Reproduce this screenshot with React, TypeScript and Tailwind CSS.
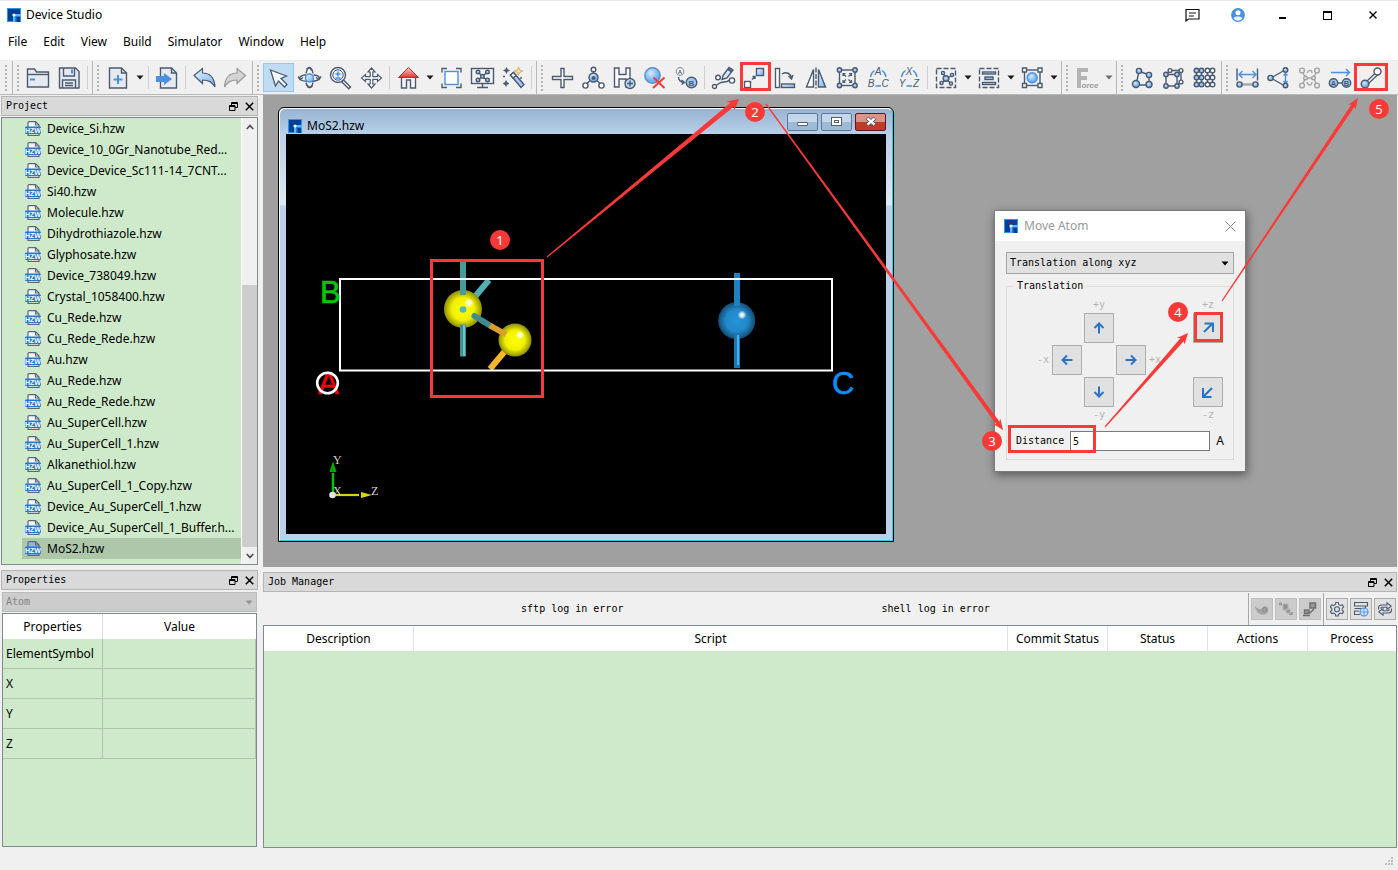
import React from 'react';

const ui = "font-['Noto_Sans',sans-serif] text-xs";
const mono = "font-['DejaVu_Sans_Mono',monospace] text-[10px] leading-3";

const INK = '#4b5a70';
const BLUE = '#4a90e2';

/* ---------- small drawing helpers ---------- */

const Icon = ({ children, size = 25 }: { children: React.ReactNode; size?: number }) => (
  <svg
    width={size}
    height={size}
    viewBox={`0 0 ${size} ${size}`}
    fill="none"
    stroke={INK}
    strokeWidth="1.4"
    className="shrink-0"
    aria-hidden="true"
  >
    {children}
  </svg>
);

const Ball = ({ x, y, r = 3, fill = 'url(#ball)' }: { x: number; y: number; r?: number; fill?: string }) => (
  <circle cx={x} cy={y} r={r} fill={fill} />
);

const Letter = ({ x, y, size = 8, fill = INK, italic = false, bold = true, children }: {
  x: number; y: number; size?: number; fill?: string; italic?: boolean; bold?: boolean; children: string;
}) => (
  <text
    x={x}
    y={y}
    fontSize={size}
    fontWeight={bold ? 'bold' : 'normal'}
    fontStyle={italic ? 'italic' : 'normal'}
    fontFamily="Liberation Sans, sans-serif"
    textAnchor="middle"
    fill={fill}
    stroke="none"
  >
    {children}
  </text>
);

const Defs = () => (
  <svg width="0" height="0" className="absolute" aria-hidden="true">
    <defs>
      <radialGradient id="ball" cx="40%" cy="35%">
        <stop offset="0" stopColor="#d8ebff" />
        <stop offset="1" stopColor="#6fb0f2" />
      </radialGradient>
      <linearGradient id="sky" x1="0" y1="0" x2="1" y2="1">
        <stop offset="0" stopColor="#eef6ff" />
        <stop offset="1" stopColor="#6fb0f2" />
      </linearGradient>
      <linearGradient id="roof" x1="0" y1="0" x2="0" y2="1">
        <stop offset="0" stopColor="#ffd0cc" />
        <stop offset="1" stopColor="#e0312c" />
      </linearGradient>
      <radialGradient id="sulfur" cx="50%" cy="50%">
        <stop offset="0" stopColor="#ffff00" />
        <stop offset="0.6" stopColor="#f0f000" />
        <stop offset="1" stopColor="#8e8e00" />
      </radialGradient>
      <radialGradient id="moly" cx="50%" cy="50%">
        <stop offset="0" stopColor="#2693d8" />
        <stop offset="0.6" stopColor="#2288c8" />
        <stop offset="1" stopColor="#124c72" />
      </radialGradient>
      <radialGradient id="shine">
        <stop offset="0" stopColor="#ffffff" />
        <stop offset="0.4" stopColor="#ffffff" stopOpacity="0.8" />
        <stop offset="1" stopColor="#ffffff" stopOpacity="0" />
      </radialGradient>
    </defs>
  </svg>
);

const Logo = () => (
  <svg width="14" height="14" viewBox="0 0 14 14" className="shrink-0" aria-hidden="true">
    <rect x=".5" y=".5" width="13" height="13" fill="#0a3d91" stroke="#1c9cf0" />
    <path d="M6 14V6h8v2.500H8V14z" fill="#56b8f5" />
    <path d="M9.500 10H13v4H9.500z" fill="#0a3d91" />
    <path d="M8 8.500h1.500V14H8z" fill="#1c7fdc" />
    <circle cx="7" cy="7" r="1.600" fill="#e8f7ff" />
  </svg>
);

/* ---------- toolbar icons ---------- */

const icons: Record<string, React.ReactNode> = {
  open: (
    <>
      <path d="M1.500 4h7l2 3h12v15h-21z" fill="#e6eaf0" />
      <path d="M1.500 9.500h21" />
      <path d="M4 14.500h5" stroke={BLUE} strokeWidth="2" />
    </>
  ),
  save: (
    <>
      <path d="M2.500 3h16l3.500 3.500V23h-19.500z" fill="#e6eaf0" />
      <path d="M6.500 3v8h11V3M5.500 23v-8h13v8M8 18h8M8 20.500h8" />
      <path d="M15 4.500v4" stroke={BLUE} strokeWidth="2" />
    </>
  ),
  create: (
    <>
      <path d="M3.500 3h12l5 5v15h-17z" fill="#e6eaf0" />
      <path d="M15.500 3v5h5" />
      <path d="M12 10v9M7.500 14.500h9" stroke={BLUE} strokeWidth="2" />
    </>
  ),
  import: (
    <>
      <path d="M5.500 3h11l5 5v15h-16z" fill="#e6eaf0" />
      <path d="M16.500 3v5h5" />
      <path d="M1 11h8V8l8 6-8 6v-3H1z" fill={BLUE} stroke="none" />
    </>
  ),
  undo: <path d="M2 10.500 10.500 3.500v4.500c8 0 12 5 12.500 14-3-5-6-7-12.500-7v3.500z" fill="url(#sky)" strokeWidth="1.200" />,
  redo: <path d="M22.500 10.500 14 3.500v4.500c-8 0-12 5-12.500 14 3-5 6-7 12.500-7v3.500z" fill="#d4d4d4" stroke="#9b9b9b" strokeWidth="1.200" />,
  select: <path d="M4.500 5l16 6-5.500 2.500 6 6-2.500 2.500-6-6L9.500 21z" fill="#f5f8fc" strokeWidth="1.300" />,
  orbit: (
    <>
      <path d="M9 9.800C4 10.500 2 12 3 14c1.500 2.800 16 3.500 19 0 1.200-2-1-3.500-5.500-4.200" />
      <path d="M9 8.500c.8-4 2-6 3.500-6s3.200 3 3.500 6M9 17.500c.8 3.500 2 5 3.500 5s2.800-1.500 3.500-5" />
      <circle cx="12.500" cy="13" r="4" fill="url(#sky)" stroke={BLUE} />
      <path d="M1 11.500l2 3 3-2M24 11.500l-2 3-3-2M9.500 4l3-1.500 2.500 3M9.500 19.500l3 3 3-1.500" />
    </>
  ),
  zoom: (
    <>
      <circle cx="10" cy="10" r="7.500" fill="#f6f9fd" />
      <circle cx="10" cy="10" r="5.200" fill="#e4f0fc" strokeWidth="1" />
      <path d="M15.500 15l7 7-1.800 1.800-7-7z" fill="#fff" />
      <path d="M10 6.500v5M7.500 9h5M7.500 13h5" stroke={BLUE} />
    </>
  ),
  pan: (
    <path
      d="M12.500 3l3.500 4h-2.200v4.700h4.700V9.500l4 3.500-4 3.500v-2.200h-4.700v4.700H16L12.500 23 9 19h2.200v-4.700H6.500v2.200l-4-3.500 4-3.500v2.200h4.700V7H9z"
      fill="#fff"
      strokeWidth="1.200"
    />
  ),
  home: (
    <>
      <path d="M5.500 12v11h5v-8h4v8h5V12" fill="#f5f5f5" />
      <path d="M12.500 2.500 2.500 12.500h20z" fill="url(#roof)" stroke="#9a3a3a" strokeWidth="1" />
    </>
  ),
  fit: (
    <>
      <rect x="6" y="6.500" width="13" height="13" fill="#fff" stroke={BLUE} />
      <path d="M3 7.500v-4h5M17 3.500h5v4M3 18.500v4h5M22 18.500v4h-5" />
    </>
  ),
  display: (
    <>
      <rect x="1.500" y="3.500" width="22" height="15" />
      <path d="M12.500 19v3M7 22.500h11M8 7l4 4 6-4M8 15l4-3 6 3" />
      <Ball x={8} y={7} r={1.800} />
      <Ball x={17.500} y={7} r={1.800} />
      <Ball x={12.500} y={11.300} r={1.800} />
      <Ball x={8} y={15} r={1.800} />
      <Ball x={17.500} y={15} r={1.800} />
    </>
  ),
  wand: (
    <>
      <path d="M9.500 10l3-2.500L23 19.500 20 22.500z" fill="#9cc9f5" />
      <path d="M9.500 10l3-2.500 2.500 3-3 2.500z" fill="#fff" />
      <path d="M17.500 2l1.200 3 3 1.200-3 1.200-1.200 3-1.200-3-3-1.200 3-1.200z" fill="#ffe680" stroke="#b9a55a" strokeWidth=".8" />
      <path
        d="M5.500 2.500l1 2 2 1-2 1-1 2-1-2-2-1 2-1zM5 15.500l1 2 2 1-2 1-1 2-1-2-2-1 2-1z"
        fill={INK}
        strokeWidth=".6"
      />
      <path d="M2 11.500h2M19 13h2" strokeWidth="1.500" />
    </>
  ),
  plus: <path d="M11 3.500h3v8h8.500v3H14v8h-3v-8H2.500v-3H11z" fill="#fff" />,
  fragment: (
    <>
      <path d="M12.500 6v6M9 15.500 5.500 19M16 15.500l3.500 3.500" />
      <circle cx="12.500" cy="12.500" r="4.500" fill="url(#ball)" />
      <circle cx="12.500" cy="13" r="1.300" fill={INK} />
      <Ball x={12.500} y={4.500} r={2.300} fill="#fff" />
      <Ball x={4.500} y={20.500} r={2.600} fill="#fff" />
      <Ball x={20.500} y={20.500} r={2.600} fill="#fff" />
    </>
  ),
  hydrogen: (
    <>
      <path d="M2.500 3h4.500v6.500h7V3H18v19H14v-8H7v8H2.500z" fill="#fff" />
      <circle cx="18" cy="18.500" r="5" fill="#b5d7f8" />
      <path d="M18 15.500v6M15 18.500h6" />
    </>
  ),
  erase: (
    <>
      <circle cx="9.500" cy="10.500" r="7.700" fill="url(#ball)" stroke="#5f8fc4" />
      <path d="M10.500 12.500l11 10.500M21.500 12.500 10 23" stroke="#ef3b3b" strokeWidth="2" />
    </>
  ),
  swapAtom: (
    <>
      <circle cx="6" cy="6.500" r="3.800" fill="#f7f7f7" stroke="#909aa8" strokeWidth="1.200" />
      <Letter x={6} y={8.800} size={6}>A</Letter>
      <circle cx="17.500" cy="17.500" r="5.300" fill="#9cc9f5" />
      <Letter x={17.500} y={20.500}>B</Letter>
      <path d="M4.500 12c0 4 2 5 5.500 5.500M7.500 15l3 2.500-3 2" />
    </>
  ),
  drawBond: (
    <>
      <path d="M4 21l6-3.500 6-1 4-2" />
      <path d="M11 14.500l1-4 6-8 4 2.500-6 8z" fill="#d7e6f6" />
      <path d="M17 4l4 2.500" strokeWidth="2.500" />
      <Ball x={3.500} y={21.500} r={2} fill="#fff" />
      <Ball x={7} y={12.500} r={2.300} fill="#fff" />
      <Ball x={21} y={15.500} r={2.600} fill="#fff" />
    </>
  ),
  move: (
    <>
      <rect x="14.500" y="3.500" width="7" height="7" fill="url(#sky)" />
      <rect x="2.500" y="16.500" width="6" height="6" fill="#fff" />
      <path d="M10 14.500l2.500-2.500M10.500 11.500H13v2.500" />
    </>
  ),
  rotate: (
    <>
      <rect x="2.500" y="3.500" width="4" height="19" fill="#fff" />
      <rect x="8.500" y="19" width="13" height="3.500" fill="url(#sky)" />
      <path d="M9 9c4-2.500 9-1 9.500 4.500M15.500 11l3 3 1.500-4" />
    </>
  ),
  mirror: (
    <>
      <path d="M9.500 4.500V22H2.500z" fill="#fff" />
      <path d="M14.500 4.500V22h7z" fill="url(#sky)" />
      <path d="M12 2.500v21" strokeDasharray="5 1.500" />
    </>
  ),
  scale: (
    <>
      <rect x="4.500" y="5" width="15.500" height="15.500" />
      <path d="M8 11V8.500h2.500M8 8.500l3 3M16.500 11V8.500H14M16.500 8.500l-3 3M8 15v2.500h2.500M8 17.500l3-3M16.500 15v2.500H14M16.500 17.500l-3-3" strokeWidth="1.200" />
      <Ball x={4.500} y={5} r={2.200} />
      <Ball x={20} y={5} r={2.200} />
      <Ball x={4.500} y={20.500} r={2.200} />
      <Ball x={20} y={20.500} r={2.200} />
    </>
  ),
  abc: (
    <>
      <path d="M4.500 12c.5-3.500 1.500-5 4-6.500M20 12c-.5-3.500-1.500-5-4-6.500M9.500 21h5.500" stroke={BLUE} />
      <Letter x={12} y={10} size={10} italic bold={false}>A</Letter>
      <Letter x={5} y={22} size={10} italic bold={false}>B</Letter>
      <Letter x={19} y={22} size={10} italic bold={false}>C</Letter>
    </>
  ),
  xyz: (
    <>
      <path d="M4.500 12c.5-3.500 1.500-5 4-6.500M20 12c-.5-3.500-1.500-5-4-6.500M9.500 21h5.500" stroke={BLUE} />
      <Letter x={12} y={10} size={10} italic bold={false}>X</Letter>
      <Letter x={5} y={22} size={10} italic bold={false}>Y</Letter>
      <Letter x={19} y={22} size={10} italic bold={false}>Z</Letter>
    </>
  ),
  selectFragment: (
    <>
      <rect x="2.500" y="3.500" width="19" height="19" strokeDasharray="5 2" />
      <path d="M12 14 9 8M12 14l6-3.500M12 14l5 4.500M12 14l-4.500 4" />
      <Ball x={9} y={8} r={1.600} />
      <Ball x={18} y={10} r={1.600} />
      <Ball x={12} y={13.500} r={2.800} />
      <Ball x={7.500} y={18} r={1.600} />
      <Ball x={17} y={18.500} r={1.600} />
    </>
  ),
  align: (
    <>
      <rect x="2.500" y="3.500" width="19" height="19" strokeDasharray="5 2" />
      <rect x="5.500" y="7" width="13" height="2" fill="#d7e6f6" />
      <rect x="8" y="12" width="8" height="2.500" fill="#9cc9f5" />
      <rect x="5.500" y="17.500" width="13" height="2" fill="#d7e6f6" />
    </>
  ),
  bounds: (
    <>
      <rect x="4.500" y="5" width="15.500" height="15.500" />
      <circle cx="12.200" cy="12.800" r="5" fill="url(#ball)" stroke={BLUE} />
      <path d="M2.500 3h4v4h-4zM18 3h4v4h-4zM2.500 18.500h4v4h-4zM18 18.500h4v4h-4z" fill="#fff" />
    </>
  ),
  force: (
    <>
      <path d="M2 3h11v4H6v4h6v4H6v8H2z" fill="#b4b4b4" stroke="none" />
      <Letter x={15} y={22.500} size={8} fill="#999" italic>orce</Letter>
    </>
  ),
  molecule: (
    <>
      <path d="M9 6 19 10v10H6z" />
      <Ball x={9} y={6} r={2.600} />
      <Ball x={19} y={10} r={2.600} />
      <Ball x={6} y={19} r={3.500} />
      <Ball x={19} y={19.500} r={3} />
    </>
  ),
  crystal: (
    <>
      <path d="M5 9.500h11v11.500H5zM9 5.500h11v11.500M5 9.500l4-4M16 9.500l4-4M16 21l4-4" />
      <Ball x={9} y={5.500} r={1.900} fill="#fff" />
      <Ball x={20} y={5.500} r={1.900} fill="#fff" />
      <Ball x={20} y={17} r={1.900} fill="#fff" />
      <Ball x={5} y={9.500} r={2.200} />
      <Ball x={16} y={9.500} r={2.200} />
      <Ball x={5} y={21} r={2.200} />
      <Ball x={16} y={21} r={2.200} />
    </>
  ),
  supercell: (
    <>
      {[5.500, 12.500, 19.500].map((y) =>
        [4.500, 9.500, 15.500, 20.500].map((x, i) => <Ball key={`${x}-${y}`} x={x} y={y} r={2.300} fill={i < 2 ? '#9cc9f5' : '#fff'} />)
      )}
      <path d="M4.500 8v2M9.500 8v2M15.500 8v2M20.500 8v2M4.500 15v2M9.500 15v2M15.500 15v2M20.500 15v2" />
    </>
  ),
  distance: (
    <>
      <path d="M2 3.500v12M22.500 3.500v12" />
      <path d="M4 9.500h17M7.500 6 4 9.500 7.500 13M17.500 6 21 9.500 17.500 13" stroke={BLUE} />
      <path d="M6 19.500h13" stroke="#a5abb3" strokeWidth="2.500" />
      <Ball x={4.500} y={19.500} r={2.600} />
      <Ball x={20.500} y={19.500} r={2.600} />
    </>
  ),
  angle: (
    <>
      <path d="M5 13 18 5.500M5 13l13 7.500" />
      <path d="M19.500 9.500v8M17.500 10.500l2-2 2 2M17.500 16l2 2 2-2" stroke={BLUE} />
      <Ball x={4.500} y={13} r={2.600} />
      <Ball x={19.500} y={5} r={2.300} />
      <Ball x={19.500} y={20.500} r={2.300} />
    </>
  ),
  dihedral: (
    <g stroke="#a3a3a3">
      <path d="M5 5.500 8.500 13 5 20.500M20 5.500 16.500 13 20 20.500M8.500 13h8M10 8c2-4 5-3 5 0M10 17c2 5 5 3 5 0" />
      <Ball x={5} y={5.500} r={2.400} fill="#eee" />
      <Ball x={20} y={5.500} r={2.400} fill="#eee" />
      <Ball x={5} y={20.500} r={2.400} fill="#eee" />
      <Ball x={20} y={20.500} r={2.400} fill="#eee" />
      <Ball x={8.500} y={13} r={1.800} fill="#eee" />
      <Ball x={16.500} y={13} r={1.800} fill="#eee" />
    </g>
  ),
  vector: (
    <>
      <path d="M3 7.500h18M18 4l3.500 3.500L18 11" stroke={BLUE} />
      <path d="M9 18h7" />
      <circle cx="5.500" cy="18" r="4.200" fill="#9cc9f5" />
      <circle cx="18.500" cy="18" r="4.200" fill="#9cc9f5" />
      <Letter x={5.500} y={20.800} size={7.500}>A</Letter>
      <Letter x={18.500} y={20.800} size={7.500}>B</Letter>
    </>
  ),
  bond: (
    <>
      <path d="M7 17 17.500 7M9 19 19.500 9" strokeWidth="1.200" />
      <Ball x={18.500} y={6.500} r={3.500} fill="#fff" />
      <Ball x={6} y={19} r={3.800} />
    </>
  ),
};

const Handle = () => (
  <span className="flex w-2.5 shrink-0 flex-col items-center justify-center gap-[2px]" aria-hidden="true">
    {[0, 1, 2, 3, 4, 5, 6].map((i) => (
      <span key={i} className="size-[2px] bg-[#b4b4b4]" />
    ))}
  </span>
);

const Caret = ({ color = '#1a1a1a' }: { color?: string }) => (
  <svg width="8" height="5" viewBox="0 0 8 5" aria-hidden="true">
    <path d="M.5.500h7L4 4.500z" fill={color} />
  </svg>
);

// '|' is a separator, a trailing 'v' entry is the menu arrow of the button before it
const toolGroups: string[][] = [
  [],
  ['open', 'save', '|'],
  ['create', 'v', '|', 'import', '|', 'undo', 'redo'],
  ['select', 'orbit', 'zoom', 'pan', '|', 'home', 'v', 'fit', 'display', 'wand', '|'],
  [
    'plus', 'fragment', 'hydrogen', 'erase', 'swapAtom', '|',
    'drawBond', 'move', 'rotate', 'mirror', 'scale', 'abc', 'xyz', '|',
    'selectFragment', 'v', 'align', 'v', 'bounds', 'v',
  ],
  ['force', 'v'],
  ['molecule', 'crystal', 'supercell'],
  ['distance', 'angle', 'dihedral', 'vector', 'bond'],
];

const Toolbar = () => (
  <div className="flex h-[34px] shrink-0 border-b border-[#b8b8b8] bg-[#f0f0f0] pl-px">
    {toolGroups.map((group, g) => (
      <div key={g} className={`flex items-stretch pr-px ${g < toolGroups.length - 1 ? 'border-r border-[#b8b8b8]' : ''}`}>
        <Handle />
        {group.map((name, i) => {
          if (name === '|') {
            return <span key={i} className="my-[5px] mr-[3px] ml-[2px] w-px bg-[#cfcfcf]" />;
          }
          if (name === 'v') {
            return (
              <button key={i} type="button" aria-label="More" className="flex w-3 items-center justify-center">
                <Caret color={group[i - 1] === 'force' ? '#6d6d6d' : '#1a1a1a'} />
              </button>
            );
          }
          return (
            <button
              key={i}
              type="button"
              aria-label={name}
              className={`my-[2px] flex w-[31px] items-center justify-center ${name === 'select' ? 'border border-[#90c8f6] bg-[#c0dcf3]' : ''}`}
            >
              <Icon>{icons[name]}</Icon>
            </button>
          );
        })}
      </div>
    ))}
  </div>
);

const TitleBar = () => (
  <header className="shrink-0 border-t border-[#e8e8e8] bg-white">
    <div className="flex h-7 items-center justify-between pr-[3px] pl-[7px]">
      <div className="flex items-center gap-[5px]">
        <Logo />
        <span>Device Studio</span>
      </div>
      <div className="flex items-center">
        <button type="button" aria-label="Messages" className="flex w-[45px] justify-center">
          <svg width="15" height="14" viewBox="0 0 15 14" fill="none" stroke="#111" strokeWidth="1.200" aria-hidden="true">
            <path d="M1 1.500h13v9.500H3.500L1 13zM4 5h7M4 8h5" />
          </svg>
        </button>
        <button type="button" aria-label="Account" className="flex w-[45px] justify-center">
          <svg width="14" height="14" viewBox="0 0 14 14" aria-hidden="true">
            <circle cx="7" cy="7" r="6.300" fill="#eaf3fe" stroke={BLUE} strokeWidth="1.200" />
            <path d="M7 .7a6.300 6.300 0 0 0-5 10C3 9 4.500 8.500 7 8.500s4 .5 5 2.200A6.300 6.300 0 0 0 7 .7" fill={BLUE} />
            <circle cx="7" cy="4.800" r="2.500" fill="#fff" />
          </svg>
        </button>
        <button type="button" aria-label="Minimize" className="flex w-[45px] justify-center">
          <span className="mt-[6px] h-[2px] w-[7px] bg-black" />
        </button>
        <button type="button" aria-label="Maximize" className="flex w-[45px] justify-center">
          <span className="size-[9px] border border-t-2 border-black" />
        </button>
        <button type="button" aria-label="Close" className="flex w-[45px] justify-center">
          <svg width="8" height="8" viewBox="0 0 8 8" stroke="#000" strokeWidth="1.400" aria-hidden="true">
            <path d="M.5.500l7 7M7.500.500l-7 7" />
          </svg>
        </button>
      </div>
    </div>
    <nav className="flex h-8 items-start gap-4 border-b border-[#ececec] px-2 pt-[5px]">
      {['File', 'Edit', 'View', 'Build', 'Simulator', 'Window', 'Help'].map((item) => (
        <button key={item} type="button">
          {item}
        </button>
      ))}
    </nav>
  </header>
);

const DockHeader = ({ title }: { title: string }) => (
  <div className="flex h-5 shrink-0 items-center border border-[#b4b4b4] bg-[#d9d9d9] pl-1">
    <h2 className={`${mono} flex-1`}>{title}</h2>
    <button type="button" aria-label={`Float ${title}`} className="flex w-4 justify-center">
      <svg width="9" height="9" viewBox="0 0 9 9" fill="none" stroke="#000" aria-hidden="true">
        <path d="M2.500 3V.500h6v5H6M2.500 1.500h6M.500 3.500H6v5H.500zM.500 4.500H6" />
      </svg>
    </button>
    <button type="button" aria-label={`Close ${title}`} className="flex w-4 justify-center">
      <svg width="9" height="9" viewBox="0 0 9 9" stroke="#000" strokeWidth="1.500" aria-hidden="true">
        <path d="M.8.800l7.400 7.400M8.200.800.800 8.200" />
      </svg>
    </button>
  </div>
);

const files = [
  'Device_Si.hzw',
  'Device_10_0Gr_Nanotube_Red...',
  'Device_Device_Sc111-14_7CNT...',
  'Si40.hzw',
  'Molecule.hzw',
  'Dihydrothiazole.hzw',
  'Glyphosate.hzw',
  'Device_738049.hzw',
  'Crystal_1058400.hzw',
  'Cu_Rede.hzw',
  'Cu_Rede_Rede.hzw',
  'Au.hzw',
  'Au_Rede.hzw',
  'Au_Rede_Rede.hzw',
  'Au_SuperCell.hzw',
  'Au_SuperCell_1.hzw',
  'Alkanethiol.hzw',
  'Au_SuperCell_1_Copy.hzw',
  'Device_Au_SuperCell_1.hzw',
  'Device_Au_SuperCell_1_Buffer.h...',
  'MoS2.hzw',
];

const FileIcon = ({ active }: { active: boolean }) => (
  <svg width="16" height="15" viewBox="0 0 16 15" className="shrink-0" aria-hidden="true">
    <path d="M3 14.300V1.500Q3 .6 4 .6h6.500L14 4v10.300z" fill={active ? '#8fb9e0' : '#f4f6f8'} stroke="#5b6878" strokeWidth="1.200" />
    <path d="M10.500.600V4H14" fill="none" stroke="#5b6878" strokeWidth="1.200" />
    <rect y="5.500" width="16" height="7.500" rx="1" fill="#2478cf" />
    <Letter x={8} y={11.800} size={7} fill="#fff">HZW</Letter>
  </svg>
);

const Chevron = ({ d }: { d: string }) => (
  <svg width="8" height="6" viewBox="0 0 8 6" fill="none" stroke="#505050" strokeWidth="1.800" aria-hidden="true">
    <path d={d} />
  </svg>
);

const ProjectPanel = () => (
  <section className="flex min-h-0 flex-1 flex-col gap-px">
    <DockHeader title="Project" />
    <div className="flex min-h-0 flex-1 border border-[#828790] bg-[#ceeaca]">
      <ul className="min-w-0 flex-1 overflow-hidden">
        {files.map((file) => {
          const active = file === 'MoS2.hzw';
          return (
            <li
              key={file}
              className={`ml-5 flex h-[21px] items-center gap-[6px] pl-[3px] whitespace-nowrap ${active ? 'bg-[#aec6aa]' : ''}`}
            >
              <FileIcon active={active} />
              <span>{file}</span>
            </li>
          );
        })}
      </ul>
      <div className="flex w-4 shrink-0 flex-col border-l border-white bg-[#f0f0f0]">
        <button type="button" aria-label="Scroll up" className="flex h-[17px] items-center justify-center">
          <Chevron d="M.8 5 4 1.500 7.200 5" />
        </button>
        <div className="flex-[150]" />
        <div className="flex-[262] bg-[#cdcdcd]" />
        <button type="button" aria-label="Scroll down" className="flex h-[17px] items-center justify-center">
          <Chevron d="M.8 1 4 4.500 7.200 1" />
        </button>
      </div>
    </div>
  </section>
);

const PropertiesPanel = () => (
  <section className="flex h-[277px] shrink-0 flex-col">
    <DockHeader title="Properties" />
    <div className="relative mx-px mt-[2px]">
      <select
        disabled
        aria-label="Property target"
        className={`${mono} block h-5 w-full appearance-none border border-[#bcbcbc] bg-[#cccccc] pl-[3px] text-[#838383] opacity-100`}
      >
        <option>Atom</option>
      </select>
      <span className="pointer-events-none absolute top-2 right-1 flex">
        <Caret color="#969696" />
      </span>
    </div>
    <div className="mx-px mt-px min-h-0 flex-1 border border-[#828790] bg-[#ceeaca]">
      <table className="w-full table-fixed border-separate border-spacing-0">
        <thead>
          <tr className="h-[25px] bg-white">
            <th className="w-[100px] border-r border-[#dcdcdc] font-normal">Properties</th>
            <th className="font-normal">Value</th>
          </tr>
        </thead>
        <tbody>
          {['ElementSymbol', 'X', 'Y', 'Z'].map((name) => (
            <tr key={name} className="h-[30px]">
              <td className="border-r border-b border-[#aec6aa] pl-[3px]">{name}</td>
              <td className="border-r border-b border-[#aec6aa]" />
            </tr>
          ))}
        </tbody>
      </table>
    </div>
  </section>
);

/* ---------- structure viewer ---------- */

const Scene = () => (
  <svg viewBox="286 134 600 400" className="block size-full bg-black" role="img" aria-label="MoS2 structure">
    <g strokeWidth="6">
      <path d="M463 262v34" stroke="#43898d" />
      <path d="M489 280l-16 19" stroke="#52b0b2" />
      <path d="M505 351l-15 18" stroke="#f5b62a" />
      <path d="M737 273v34" stroke="#1f78b4" />
    </g>
    <circle cx="463" cy="309" r="19" fill="url(#sulfur)" />
    <circle cx="469" cy="303" r="5" fill="url(#shine)" />
    <path d="M463 262v33" stroke="#4a9a9d" strokeWidth="6" />
    <path d="M463 324.500v32" stroke="#438f92" strokeWidth="6" />
    <path d="M464 325v31" stroke="#6cc4c5" strokeWidth="2" />
    <circle cx="463" cy="309.500" r="3.300" fill="#55b5b8" />
    <circle cx="515" cy="340" r="16.500" fill="url(#sulfur)" />
    <circle cx="520" cy="335" r="4.500" fill="url(#shine)" />
    <path d="M474.500 316 490 325.500" stroke="#3f8c90" strokeWidth="6" strokeLinecap="round" />
    <path d="M490 325.500l16 9" stroke="#d9a02c" strokeWidth="6" />
    <circle cx="736.700" cy="320.700" r="18.500" fill="url(#moly)" />
    <circle cx="742" cy="315" r="4.500" fill="url(#shine)" />
    <path d="M737 273v33" stroke="#2080c0" strokeWidth="6" />
    <path d="M737 335v33" stroke="#1d74ae" strokeWidth="6" />
    <path d="M738 335v30" stroke="#4ab0ee" strokeWidth="2" />
    <rect x="340" y="279" width="492" height="91.500" fill="none" stroke="#fff" strokeWidth="2" />
    <g fontFamily="Liberation Sans, sans-serif" fontSize="31" strokeWidth=".6">
      <text x="320" y="303" fill="#00c800" stroke="#00c800">B</text>
      <text x="318" y="394" fill="#f00000" stroke="#f00000">A</text>
      <text x="832" y="394" fill="#0c8ef5" stroke="#0c8ef5">C</text>
    </g>
    <circle cx="327.500" cy="383" r="10.300" fill="none" stroke="#fff" strokeWidth="2.600" />
    <path d="M333 494V473" stroke="#00c400" strokeWidth="2.500" />
    <path d="M333 461l3.500 11h-7z" fill="#00a800" />
    <path d="M333 495h26" stroke="#d6d600" strokeWidth="2.200" />
    <path d="M372 495l-11 3v-6z" fill="#d6d600" />
    <circle cx="332.500" cy="495" r="3.300" fill="#e4e4e4" />
    <g fontFamily="Liberation Serif, serif" fontSize="12" fill="#d0d0d0">
      <text x="333" y="464">Y</text>
      <text x="333" y="495">X</text>
      <text x="371" y="495">Z</text>
    </g>
  </svg>
);

const frameButton =
  'flex h-[18px] w-[31px] items-center justify-center rounded-[2px] border border-[#5c7898] bg-linear-to-b from-[#c3d6ea] from-50% to-[#9fbad6] to-50%';

const StructureWindow = () => (
  <div className="absolute top-[12px] left-[15px] flex h-[435px] w-[616px] flex-col rounded-t-md border border-black bg-[#b9d1ea]">
    <div className="flex min-h-0 flex-1 flex-col rounded-t-md border border-t-white border-r-[#35c8ee] border-b-[#35c8ee] border-l-white bg-[linear-gradient(to_bottom,#98b4d2_0,#b9d1ea_26px,#dfe9f5_96px,#b9d1ea_97px)] px-[6px] pb-[6px]">
      <div className="flex h-[25px] shrink-0 items-center gap-[5px] pt-2 pl-[2px]">
        <Logo />
        <span className="flex-1">MoS2.hzw</span>
        <div className="flex gap-[3px] pb-2">
          <button type="button" aria-label="Minimize window" className={frameButton}>
            <span className="mt-1 h-1 w-[11px] rounded-[1px] border border-[#53606e] bg-white" />
          </button>
          <button type="button" aria-label="Restore window" className={frameButton}>
            <span className="flex h-[9px] w-[11px] items-center justify-center border border-[#53606e] bg-white">
              <span className="h-[3px] w-[5px] border border-[#53606e]" />
            </span>
          </button>
          <button
            type="button"
            aria-label="Close window"
            className="flex h-[18px] w-[31px] items-center justify-center rounded-[2px] border border-[#5b1620] bg-linear-to-b from-[#dd9488] from-50% to-[#bf3d28] to-50%"
          >
            <svg width="12" height="9" viewBox="0 0 12 9" aria-hidden="true">
              <path d="M2 1l8 7M10 1 2 8" stroke="#53606e" strokeWidth="4" />
              <path d="M2.500 1.400l7 6.200M9.500 1.400l-7 6.200" stroke="#fff" strokeWidth="2.200" />
            </svg>
          </button>
        </div>
      </div>
      <div className="min-h-0 flex-1">
        <Scene />
      </div>
    </div>
  </div>
);

/* ---------- move atom dialog ---------- */

const arrows = [
  { label: '+y', cell: 'col-start-3 row-start-2', d: 'M7 12.500V2.500M2.500 7 7 2.500 11.500 7' },
  { label: '-x', cell: 'col-start-2 row-start-3', d: 'M12.500 7H2.500M7 2.500 2.500 7 7 11.500' },
  { label: '+x', cell: 'col-start-4 row-start-3', d: 'M1.500 7h10M7 2.500 11.500 7 7 11.500' },
  { label: '-y', cell: 'col-start-3 row-start-4', d: 'M7 1.500v10M2.500 7 7 11.500 11.500 7' },
  { label: '+z', cell: 'col-start-7 row-start-2', d: 'M3 11l8.500-8.500M3.500 2.500h8.500V11' },
  { label: '-z', cell: 'col-start-7 row-start-4', d: 'M11 3l-8.500 8.500M2 3v9h8.500' },
];

const axisLabels = [
  { label: '+y', cell: 'col-start-3 row-start-1' },
  { label: '-x', cell: 'col-start-1 row-start-3' },
  { label: '+x', cell: 'col-start-5 row-start-3' },
  { label: '-y', cell: 'col-start-3 row-start-5' },
  { label: '+z', cell: 'col-start-7 row-start-1' },
  { label: '-z', cell: 'col-start-7 row-start-5' },
];

const MoveAtomDialog = () => (
  <div
    role="dialog"
    aria-labelledby="move-title"
    className="absolute top-[115px] left-[731px] w-[252px] border border-[#7b7b7b] bg-[#f0f0f0] pb-[11px] shadow-[1px_3px_9px_rgba(0,0,0,0.45)]"
  >
    <div className="flex h-[30px] items-center gap-[6px] bg-white pr-[9px] pl-[9px]">
      <Logo />
      <span id="move-title" className="flex-1 text-[#999]">Move Atom</span>
      <button type="button" aria-label="Close dialog">
        <svg width="11" height="11" viewBox="0 0 11 11" stroke="#8a8a8a" aria-hidden="true">
          <path d="M.5.500l10 10M10.500.500l-10 10" />
        </svg>
      </button>
    </div>
    <div className={`${mono} px-[11px] pt-[11px]`}>
      <div className="relative">
        <select
          aria-label="Translation mode"
          className="block h-[22px] w-full appearance-none border border-[#a5a5a5] bg-[#e1e1e1] pl-[3px] text-black"
        >
          <option>Translation along xyz</option>
        </select>
        <span className="pointer-events-none absolute top-[9px] right-[5px] flex">
          <Caret color="#000" />
        </span>
      </div>
      <fieldset className="mt-[6px] border border-[#dcdcdc] pb-2">
        <legend className="ml-[7px] px-[3px]">Translation</legend>
        <div className="mt-[7px] grid grid-cols-[14px_30px_30px_30px_14px_1fr_30px] grid-rows-[12px_30px_30px_30px_12px] gap-[2px] pr-[10px] pl-[29px] text-center text-[#b4b4b4]">
          {axisLabels.map((a) => (
            <span key={a.label} className={`${a.cell} self-center`}>{a.label}</span>
          ))}
          {arrows.map((a) => (
            <button
              key={a.label}
              type="button"
              aria-label={`Move ${a.label}`}
              className={`${a.cell} flex items-center justify-center border border-[#adadad] bg-[#e1e1e1]`}
            >
              <svg width="14" height="14" viewBox="0 0 14 14" fill="none" stroke="#2b74c4" strokeWidth="2" aria-hidden="true">
                <path d={a.d} />
              </svg>
            </button>
          ))}
        </div>
        <div className="mt-[10px] flex items-center pr-[9px] pl-[9px]">
          <label htmlFor="distance" className="w-[54px]">Distance</label>
          <input
            id="distance"
            defaultValue="5"
            className="h-5 min-w-0 flex-1 border border-[#7a7a7a] bg-white px-[2px]"
          />
          <span className={`${ui} pl-[6px]`}>A</span>
        </div>
      </fieldset>
    </div>
  </div>
);

/* ---------- job manager ---------- */

const jobColumns = [
  { name: 'Description', width: 'w-[150px]' },
  { name: 'Script', width: '' },
  { name: 'Commit Status', width: 'w-[100px]' },
  { name: 'Status', width: 'w-[100px]' },
  { name: 'Actions', width: 'w-[100px]' },
  { name: 'Process', width: 'w-[88px]' },
];

const jobTools: { name: string; off?: boolean; art: React.ReactNode }[] = [
  {
    name: 'Connect', off: true,
    art: (
      <>
        <path d="M1 5c1 6 4 8.500 8 8.500 4 0 6-2.500 5-6-1-3-5-3-5.500-.5C7 9 3 8 1 5z" fill="#a2a2a2" stroke="none" />
        <circle cx="10.500" cy="8.500" r="2" stroke="#8a8a8a" strokeWidth="1" />
      </>
    ),
  },
  {
    name: 'Transfer', off: true,
    art: (
      <>
        <path d="M1 1.500h3v3H1zM11 11h4v3h-4z" fill="#9d9d9d" stroke="none" />
        <path d="M5 3h5v6H5zM8 8h4v4H8z" fill="#8f8f8f" stroke="#b5b5b5" strokeWidth="1" />
      </>
    ),
  },
  {
    name: 'Terminal', off: true,
    art: <path d="M8 2h5.500v5H8zM2.500 9H7v3.500H2.500zM8 12l4-4M1 14.500h7" fill="#9a9a9a" stroke="#6f6f6f" strokeWidth="1.500" />,
  },
  {
    name: 'Settings',
    art: (
      <g strokeWidth="1.100">
        <path d="M6.800 1.500h2.400l.5 2 1.700 1 2-.6 1.200 2.100L13.200 7.400v1.700l1.400 1.400-1.200 2.100-2-.6-1.700 1-.5 2H6.800l-.5-2-1.700-1-2 .6-1.200-2.100 1.400-1.400V7.400L1.400 6l1.200-2.100 2 .6 1.700-1z" />
        <circle cx="8" cy="8.200" r="2.500" />
      </g>
    ),
  },
  {
    name: 'Queue',
    art: (
      <g strokeWidth="1.100">
        <path d="M1.500 1.500h13V5h-13zM12.500 5v2.500H1.500M7 13.500H1.500V10H6" />
        <circle cx="11" cy="11" r="4" fill="#cfe4fb" stroke={BLUE} />
        <path d="M7 11h8M11 7v8" stroke={BLUE} strokeWidth=".8" />
      </g>
    ),
  },
  {
    name: 'Refresh',
    art: (
      <g strokeWidth="1.100">
        <path d="M1.500 8.500V7Q1.500 4 4.500 4H10V1.800l4.500 3.700M14.500 7.500V9q0 3-3 3H6v2.200L1.500 10.500" />
        <path d="M4 8V7q0-.8 1-.8h5v2l4-2.700M12 8v1q0 .8-1 .8H6v-2l-4 2.700" />
      </g>
    ),
  },
];

const JobTools = ({ tools }: { tools: typeof jobTools }) => (
  <div className="flex items-center gap-[2px] border-l border-[#a8a8a8] pl-[2px]">
    {tools.map((tool) => (
      <button
        key={tool.name}
        type="button"
        aria-label={tool.name}
        disabled={tool.off}
        className={`flex size-[22px] items-center justify-center border ${tool.off ? 'border-[#bfbfbf] bg-[#cccccc]' : 'border-[#adadad] bg-[#e1e1e1]'}`}
      >
        <Icon size={16}>{tool.art}</Icon>
      </button>
    ))}
  </div>
);

const JobManager = () => (
  <section className="flex h-[276px] shrink-0 flex-col">
    <DockHeader title="Job Manager" />
    <div className="flex h-[33px] shrink-0">
      <div className={`${mono} flex flex-1 items-center justify-evenly pt-px`}>
        <span>sftp log in error</span>
        <span>shell log in error</span>
      </div>
      <div className="flex gap-[2px] pt-px pr-px">
        <JobTools tools={jobTools.slice(0, 3)} />
        <JobTools tools={jobTools.slice(3)} />
      </div>
    </div>
    <div className="min-h-0 flex-1 border border-[#828790] bg-[#ceeaca]">
      <table className="w-full table-fixed border-separate border-spacing-0">
        <thead>
          <tr className="h-[25px] bg-white">
            {jobColumns.map((col) => (
              <th key={col.name} className={`${col.width} border-r border-[#e2e2e2] font-normal whitespace-nowrap last:border-r-0`}>
                {col.name}
              </th>
            ))}
          </tr>
        </thead>
      </table>
    </div>
  </section>
);

/* ---------- numbered walkthrough drawn over the page ---------- */

const RED = '#fb3a38';

// Arrow that starts as a hairline and widens up to its head
const taper = (x1: number, y1: number, x2: number, y2: number, half: number) => {
  const len = Math.hypot(x2 - x1, y2 - y1);
  const ux = (x2 - x1) / len;
  const uy = (y2 - y1) / len;
  const head = half * 2.3;
  const at = (along: number, side: number) =>
    `${(x1 + ux * along - uy * side).toFixed(1)},${(y1 + uy * along + ux * side).toFixed(1)}`;
  return [
    at(0, 0.6), at(len - 9, half), at(len - 11, head), at(len, 0), at(len - 11, -head), at(len - 9, -half), at(0, -0.6),
  ].join(' ');
};

const boxes = [
  [431, 260, 111, 136],
  [741, 63, 28, 26],
  [1009, 426, 85, 25],
  [1195, 313, 26, 27],
  [1355, 64, 31, 25],
];

const steps = [
  [500, 240],
  [755, 112],
  [992, 441],
  [1178, 312],
  [1379, 109],
];

const Walkthrough = () => (
  <svg width="1398" height="870" className="pointer-events-none absolute top-0 left-0" aria-hidden="true">
    <g fill={RED}>
      <polygon points={taper(547, 257, 739, 99, 2.6)} />
      <polygon points={taper(766, 104, 1003, 430, 2)} />
      <polygon points={taper(1105, 427, 1188, 333, 2.2)} />
      <polygon points={taper(1222, 301, 1358, 98, 1.9)} />
    </g>
    {boxes.map(([x, y, w, h]) => (
      <rect key={x} x={x + 0.5} y={y + 0.5} width={w} height={h} fill="none" stroke={RED} strokeWidth="3" />
    ))}
    {steps.map(([x, y], i) => (
      <g key={x}>
        <circle cx={x} cy={y} r="10" fill={RED} />
        <text x={x} y={y + 4.5} textAnchor="middle" fontSize="13" fontFamily="Noto Sans, sans-serif" fill="#fff">
          {i + 1}
        </text>
      </g>
    ))}
  </svg>
);

const App = () => {
  return (
    <div className={`${ui} relative flex h-screen flex-col overflow-hidden bg-[#f0f0f0] text-black`}>
      <Defs />
      <TitleBar />
      <Toolbar />
      <div className="flex min-h-0 flex-1 gap-1 pr-[1px]">
        <aside className="flex w-[259px] shrink-0 flex-col gap-[5px] p-px">
          <ProjectPanel />
          <PropertiesPanel />
        </aside>
        <main className="flex min-w-0 flex-1 flex-col gap-[5px]">
          <div className="relative min-h-0 flex-1 overflow-hidden bg-[#a0a0a0]">
            <StructureWindow />
            <MoveAtomDialog />
          </div>
          <JobManager />
        </main>
      </div>
      <footer className="flex h-[22px] shrink-0 items-end justify-end p-1">
        <svg width="9" height="9" viewBox="0 0 9 9" fill="#bdbdbd" aria-hidden="true">
          <path d="M6 0h2v2H6zM3 3h2v2H3zM6 3h2v2H6zM0 6h2v2H0zM3 6h2v2H3zM6 6h2v2H6z" />
        </svg>
      </footer>
      <Walkthrough />
    </div>
  );
};

export default App;
